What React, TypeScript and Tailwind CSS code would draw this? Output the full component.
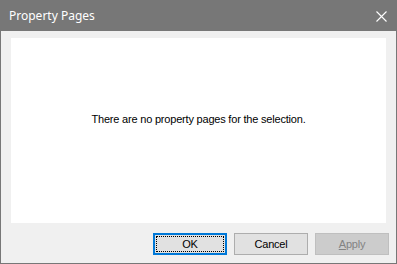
export default function App() {
  return (
    <div className="w-[397px] h-[264px] flex flex-col border border-[#777777] bg-[#f0f0f0] font-['Liberation_Sans',Arial,sans-serif]">
      {/* Title bar */}
      <div className="h-[30px] shrink-0 bg-[#777777] flex items-center justify-between pl-[8px] pr-[9px]">
        <span className="text-[12px] text-white font-['Noto_Sans',sans-serif] leading-none">Property Pages</span>
        <svg width="11" height="11" viewBox="0 0 11 11" className="text-white">
          <path d="M0.5 0.5 L10.5 10.5 M10.5 0.5 L0.5 10.5" stroke="currentColor" strokeWidth="1.1" />
        </svg>
      </div>

      {/* Body */}
      <div className="flex-1 flex flex-col px-[10px] pt-[7px] pb-[8px]">
        <div className="flex-1 bg-white pt-[75px] text-center text-[11px] leading-[13px] tracking-[-0.2px] text-black">
          There are no property pages for the selection.
        </div>
        <div className="flex justify-end gap-[7px] mt-[10px] mr-[-3px] text-[11px] tracking-[-0.2px]">
          <button className="w-[74px] h-[22px] bg-[#e1e1e1] border-2 border-[#0078d7] flex items-center justify-center p-[1px]">
            <span className="w-full h-full border border-dotted border-black flex items-center justify-center text-black">OK</span>
          </button>
          <button className="w-[74px] h-[22px] bg-[#e1e1e1] border border-[#adadad] flex items-center justify-center text-black">
            Cancel
          </button>
          <button className="w-[74px] h-[22px] bg-[#cccccc] border border-[#bfbfbf] flex items-center justify-center text-[#838383]">
            <span><span className="underline">A</span>pply</span>
          </button>
        </div>
      </div>
    </div>
  )
}
